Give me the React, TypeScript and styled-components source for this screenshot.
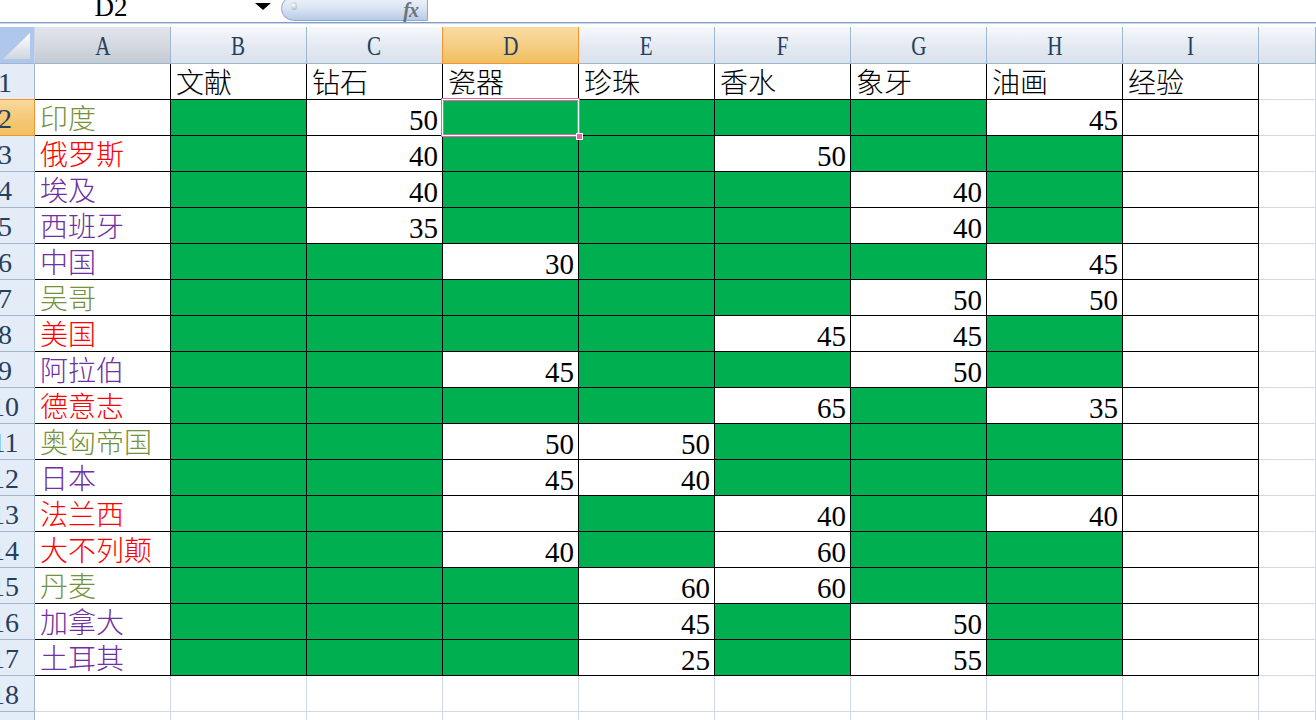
import React from "react";
import styled, { createGlobalStyle, css } from "styled-components";

const GlobalStyle = createGlobalStyle`
    html, body {
        margin: 0;
        padding: 0;
        background: #ffffff;
        overflow: hidden;
    }
    body {
        font-family: "Liberation Serif", "Noto Sans CJK SC", serif;
        width: 1316px;
        height: 720px;
    }
`;

const OLIVE = "#76923C";
const RED = "#FF0000";
const PURPLE = "#7030A0";
const GREEN = "#00B050";
const ORANGE = "#F29436";
const HEADER_LINE = "#9EB6CE";
const GRID_LINE = "#D0D7E5";

const G = "g";

const columns = ["A", "B", "C", "D", "E", "F", "G", "H", "I", ""];
const titles = ["文献", "钻石", "瓷器", "珍珠", "香水", "象牙", "油画", "经验"];

const rows: [string, string, string[]][] = [
    ["印度", OLIVE, [G, "50", G, G, G, G, "45", ""]],
    ["俄罗斯", RED, [G, "40", G, G, "50", G, G, ""]],
    ["埃及", PURPLE, [G, "40", G, G, G, "40", G, ""]],
    ["西班牙", PURPLE, [G, "35", G, G, G, "40", G, ""]],
    ["中国", PURPLE, [G, G, "30", G, G, G, "45", ""]],
    ["吴哥", OLIVE, [G, G, G, G, G, "50", "50", ""]],
    ["美国", RED, [G, G, G, G, "45", "45", G, ""]],
    ["阿拉伯", PURPLE, [G, G, "45", G, G, "50", G, ""]],
    ["德意志", RED, [G, G, G, G, "65", G, "35", ""]],
    ["奥匈帝国", OLIVE, [G, G, "50", "50", G, G, G, ""]],
    ["日本", PURPLE, [G, G, "45", "40", G, G, G, ""]],
    ["法兰西", RED, [G, G, "", G, "40", G, "40", ""]],
    ["大不列颠", RED, [G, G, "40", G, "60", G, G, ""]],
    ["丹麦", OLIVE, [G, G, G, "60", "60", G, G, ""]],
    ["加拿大", PURPLE, [G, G, G, "45", G, "50", G, ""]],
    ["土耳其", PURPLE, [G, G, G, "25", G, "55", G, ""]],
];

/* formula bar */

const FormulaBar = styled.div`
    display: flex;
    align-items: flex-start;
    height: 22px;
    overflow: hidden;
    background: #ffffff;
`;

const NameBox = styled.div`
    width: 222px;
    height: 22px;
    text-align: center;
    font-size: 27px;
    line-height: 26px;
    color: #000;
    margin-top: -6px;
`;

const DropArrow = styled.div`
    width: 0;
    height: 0;
    margin: 3px 0 0 33px;
    border-left: 8px solid transparent;
    border-right: 8px solid transparent;
    border-top: 7px solid #000;
`;

const FxButton = styled.div`
    position: relative;
    margin: -4px 0 0 10px;
    width: 147px;
    height: 25px;
    box-sizing: border-box;
    border: 1px solid #8EA8CB;
    border-radius: 0 0 0 13px;
    border-top-left-radius: 13px;
    background: linear-gradient(#EEF3FA, #DCE6F4 45%, #B6CBE7);
    display: flex;
    align-items: flex-start;
    justify-content: flex-end;
    padding: 4px 9px 0 0;
`;

const Knob = styled.span`
    position: absolute;
    left: 9px;
    top: 5px;
    width: 6px;
    height: 8px;
    border-radius: 50%;
    background: radial-gradient(circle at 40% 40%, #ffffff, #9AA3AE);
`;

const FxLabel = styled.span`
    font-family: "Liberation Serif", serif;
    font-style: italic;
    font-weight: bold;
    font-size: 20px;
    line-height: 18px;
    color: #6E7378;
    letter-spacing: -1px;
`;

const Divider = styled.div`
    height: 4px;
    border-top: 1px solid #7F9DC6;
    box-shadow: inset 0 1px 0 #C9D8EC;
    background: #ffffff;
`;

/* sheet */

const Sheet = styled.div`
    display: grid;
    grid-template-columns: 35px repeat(9, 136px) 1fr;
    grid-template-rows: 37px repeat(19, 36px);
    font-weight: 300;
`;

const Corner = styled.div`
    position: relative;
    box-sizing: border-box;
    background: #AEC7EA;
    border-right: 1px solid #C5D6EE;
    border-bottom: 1px solid ${HEADER_LINE};
    &::after {
        content: "";
        position: absolute;
        right: 4px;
        bottom: 4px;
        width: 27px;
        height: 26px;
        background: linear-gradient(#FFFFFF, #D0D6DF);
        clip-path: polygon(100% 0, 100% 100%, 0 100%);
    }
`;

const ColHead = styled.div<{ $state: "normal" | "hover" | "active" }>`
    box-sizing: border-box;
    display: flex;
    justify-content: center;
    align-items: center;
    padding-top: 3px;
    font-size: 27px;
    font-weight: 400;
    color: #243F60;
    border-right: 1px solid ${HEADER_LINE};
    border-bottom: 1px solid ${HEADER_LINE};
    background: linear-gradient(#F6F8FB, #E4E9F1 55%, #D9E1EC);
    ${(p) =>
        p.$state === "hover" &&
        css`
            background: linear-gradient(#E2E5EA, #D3D7DE 55%, #C4CAD3);
        `}
    ${(p) =>
        p.$state === "active" &&
        css`
            background: linear-gradient(#F9DCA4, #F5CD80 55%, #F0BF5E);
            border-right-color: ${ORANGE};
            border-bottom-color: ${ORANGE};
            box-shadow: -1px 0 0 ${ORANGE};
        `}
`;

const Letter = styled.span`
    display: inline-block;
    transform: scaleX(0.78);
`;

const RowHead = styled.div<{ $active?: boolean }>`
    box-sizing: border-box;
    overflow: hidden;
    display: flex;
    align-items: center;
    font-size: 28px;
    font-weight: 400;
    color: #243F60;
    background: #E4ECF7;
    border-right: 1px solid ${HEADER_LINE};
    border-bottom: 1px solid ${HEADER_LINE};
    ${(p) =>
        p.$active &&
        css`
            background: linear-gradient(#F9D99C, #F4C773 60%, #F1C060);
            border-bottom-color: ${ORANGE};
            border-right-color: ${ORANGE};
            box-shadow: 0 -1px 0 ${ORANGE};
        `}
`;

const RowNum = styled.span`
    flex: none;
    width: 40px;
    margin-left: -15px;
    text-align: center;
    line-height: 28px;
    padding-top: 2px;
`;

const Cell = styled.div<{ $fill?: boolean; $framed?: boolean; $right?: boolean }>`
    position: relative;
    box-sizing: border-box;
    display: flex;
    align-items: flex-end;
    justify-content: ${(p) => (p.$right ? "flex-end" : "flex-start")};
    padding: 0 4px 5px 5px;
    font-size: 29px;
    line-height: 20px;
    white-space: nowrap;
    color: #000;
    background: ${(p) => (p.$fill ? GREEN : "#ffffff")};
    border-right: 1px solid ${(p) => (p.$framed ? "#000" : GRID_LINE)};
    border-bottom: 1px solid ${(p) => (p.$framed ? "#000" : GRID_LINE)};
`;

const Label = styled.span<{ $color: string }>`
    color: ${(p) => p.$color};
    font-size: 28px;
`;

const Selection = styled.div`
    position: absolute;
    z-index: 2;
    top: -2px;
    left: -2px;
    right: -2px;
    bottom: -2px;
    border: 1px solid #E866A6;
    box-shadow: inset 0 0 0 1px #ffffff, inset 0 0 0 2px #E866A6;
    pointer-events: none;
    &::after {
        content: "";
        position: absolute;
        right: -4px;
        bottom: -4px;
        width: 5px;
        height: 5px;
        background: #E866A6;
        border: 1px solid #ffffff;
    }
`;

export default function App() {
    const lastRow = 19;
    const sheetRows: React.ReactNode[] = [];

    // header row
    sheetRows.push(<Corner key="corner" />);
    columns.forEach((c, i) => {
        const state = c === "D" ? "active" : c === "A" ? "hover" : "normal";
        sheetRows.push(
            <ColHead key={`h-${i}`} $state={state}>
                <Letter>{c}</Letter>
            </ColHead>
        );
    });

    for (let r = 1; r <= lastRow; r++) {
        sheetRows.push(
            <RowHead key={`r-${r}`} $active={r === 2}>
                <RowNum>{r}</RowNum>
            </RowHead>
        );
        const data = r >= 2 && r <= 17 ? rows[r - 2] : null;
        for (let c = 0; c < columns.length; c++) {
            const framed = r <= 17 && c <= 8;
            const key = `c-${r}-${c}`;
            if (r === 1) {
                sheetRows.push(
                    <Cell key={key} $framed={framed}>
                        {c >= 1 && c <= 8 ? <Label $color="#000">{titles[c - 1]}</Label> : ""}
                    </Cell>
                );
                continue;
            }
            if (!data || c === 9) {
                sheetRows.push(<Cell key={key} $framed={framed} />);
                continue;
            }
            if (c === 0) {
                sheetRows.push(
                    <Cell key={key} $framed>
                        <Label $color={data[1]}>{data[0]}</Label>
                    </Cell>
                );
                continue;
            }
            const value = data[2][c - 1];
            sheetRows.push(
                <Cell key={key} $framed $fill={value === G} $right>
                    {value !== G ? value : ""}
                    {r === 2 && c === 3 && <Selection />}
                </Cell>
            );
        }
    }

    return (
        <>
            <GlobalStyle />
            <FormulaBar>
                <NameBox>D2</NameBox>
                <DropArrow />
                <FxButton>
                    <Knob />
                    <FxLabel>fx</FxLabel>
                </FxButton>
            </FormulaBar>
            <Divider />
            <Sheet>{sheetRows}</Sheet>
        </>
    );
}
